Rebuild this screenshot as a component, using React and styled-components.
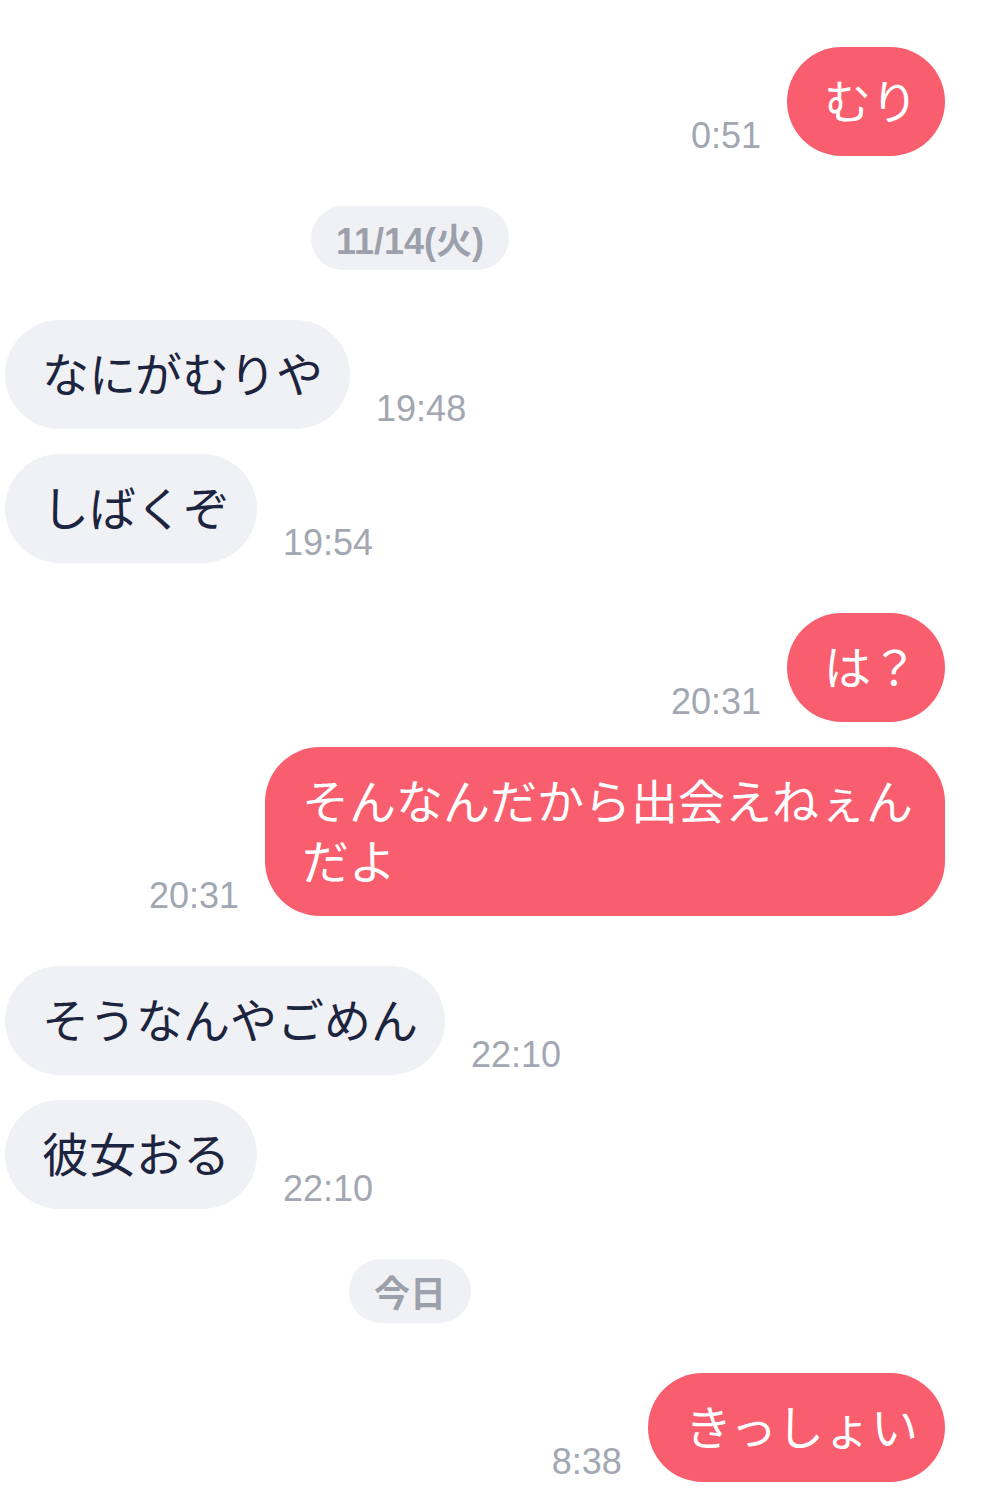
import React from 'react';
import styled, { createGlobalStyle } from 'styled-components';

const GlobalStyle = createGlobalStyle`
  html, body {
    margin: 0;
    padding: 0;
    background: #ffffff;
  }
  body {
    font-family: "Liberation Sans", "Noto Sans CJK JP", sans-serif;
    -webkit-font-smoothing: antialiased;
  }
`;

const items = [
  { type: 'msg', mine: true, text: 'むり', time: '0:51' },
  { type: 'date', text: '11/14(火)' },
  { type: 'msg', mine: false, text: 'なにがむりや', time: '19:48' },
  { type: 'msg', mine: false, text: 'しばくぞ', time: '19:54' },
  { type: 'msg', mine: true, text: 'は？', time: '20:31' },
  { type: 'msg', mine: true, text: 'そんなんだから出会えねぇんだよ', time: '20:31' },
  { type: 'msg', mine: false, text: 'そうなんやごめん', time: '22:10' },
  { type: 'msg', mine: false, text: '彼女おる', time: '22:10' },
  { type: 'date', text: '今日' },
  { type: 'msg', mine: true, text: 'きっしょい', time: '8:38' },
];

const App = () => {
  return (
    <>
      <GlobalStyle />
      <Thread>
        {items.map((item, i) => {
          const prev = items[i - 1];
          const sameSide =
            prev && prev.type === 'msg' && item.type === 'msg' && prev.mine === item.mine;
          const space = i === 0 ? 0 : sameSide ? 25 : 50;

          if (item.type === 'date') {
            return (
              <DateRow key={i} $space={space}>
                <DatePill>{item.text}</DatePill>
              </DateRow>
            );
          }

          return (
            <Row key={i} $mine={item.mine} $space={space}>
              {item.mine && <Time>{item.time}</Time>}
              <Bubble $mine={item.mine}>{item.text}</Bubble>
              {!item.mine && <Time>{item.time}</Time>}
            </Row>
          );
        })}
      </Thread>
    </>
  );
};

const Thread = styled.div`
  display: flex;
  flex-direction: column;
  padding: 47px 49px 17px 5px;
  min-height: 1497px;
  box-sizing: border-box;
`;

const Row = styled.div`
  display: flex;
  align-items: flex-end;
  justify-content: ${(p) => (p.$mine ? 'flex-end' : 'flex-start')};
  gap: 26px;
  margin-top: ${(p) => p.$space}px;
`;

const Bubble = styled.div`
  max-width: 680px;
  box-sizing: border-box;
  padding: 22px 27px 27px 37px;
  border-radius: 55px;
  font-family: "Noto Sans CJK JP", sans-serif;
  font-size: 47px;
  line-height: 60px;
  background: ${(p) => (p.$mine ? '#f95e6e' : '#f0f1f4')};
  color: ${(p) => (p.$mine ? '#ffffff' : '#1c2440')};
`;

const Time = styled.span`
  flex-shrink: 0;
  font-family: "Liberation Sans", sans-serif;
  font-size: 36px;
  line-height: 36px;
  margin-bottom: 2px;
  color: #a3a7b2;
`;

const DateRow = styled.div`
  display: flex;
  justify-content: center;
  margin-top: ${(p) => p.$space}px;
  margin-right: 130px;
`;

const DatePill = styled.div`
  height: 64px;
  display: flex;
  align-items: center;
  padding: 0 25px;
  border-radius: 32px;
  background: #f0f1f4;
  color: #9ca0ab;
  font-family: "Liberation Sans", "Noto Sans CJK JP", sans-serif;
  font-weight: 700;
  font-size: 36px;
`;

export default App;
